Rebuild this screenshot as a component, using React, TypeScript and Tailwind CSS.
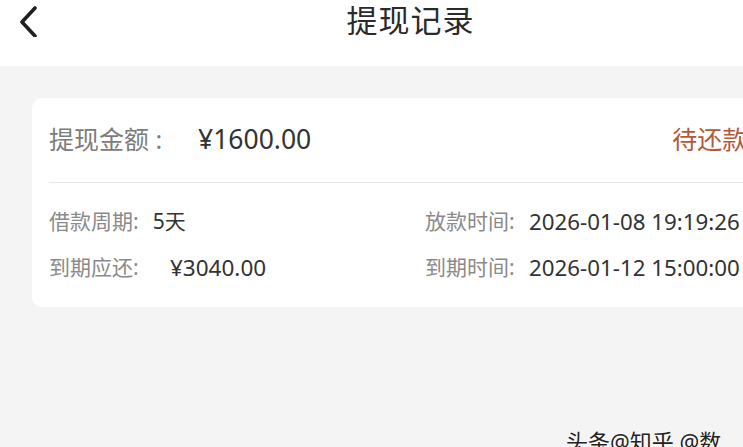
import React from "react";

const font = { fontFamily: '"Noto Sans", "Noto Sans CJK SC", sans-serif' };

export default function App() {
  return (
    <div
      className="relative w-[743px] h-[447px] overflow-hidden bg-[#f4f4f4]"
      style={font}
    >
      {/* Header */}
      <div className="relative flex h-[66px] items-start justify-center bg-white">
        <svg
          className="absolute left-[16px] top-[5px]"
          width="24"
          height="32"
          viewBox="0 0 24 32"
          fill="none"
        >
          <path
            d="M19 3 L6 17 L19 31"
            stroke="#1f1f1f"
            strokeWidth="3.6"
            strokeLinecap="round"
            strokeLinejoin="round"
          />
        </svg>
        <div className="ml-[78px] text-[31px] leading-[40px] tracking-[1px] text-[#2a2a2a]">
          提现记录
        </div>
      </div>

      {/* Card */}
      <div className="ml-[32px] mt-[32px] w-[780px] rounded-[10px] bg-white pl-[17px]">
        <div className="flex h-[84px] items-center">
          <span className="w-[149px] text-[25px] text-[#7c7c7c]">提现金额 :</span>
          <span className="text-[26.5px] text-[#333333]">¥1600.00</span>
          <span className="ml-[361px] text-[25px] whitespace-nowrap text-[#b4583a]">待还款</span>
        </div>
        <div className="h-px bg-[#e8e8e8]" />
        <div className="flex pt-[27px] pb-[27px]">
          <div className="flex w-[376px] flex-col gap-[22px]">
            <div className="flex h-[24px] items-center text-[21px]">
              <span className="text-[#8a8a8a]">借款周期:</span>
              <span className="ml-[14px] text-[#333333]">5天</span>
            </div>
            <div className="flex h-[24px] items-center text-[21px]">
              <span className="w-[121px] text-[#8a8a8a]">到期应还:</span>
              <span className="text-[22.5px] text-[#333333]">¥3040.00</span>
            </div>
          </div>
          <div className="flex flex-col gap-[22px]">
            <div className="flex h-[24px] items-center text-[21px] whitespace-nowrap">
              <span className="w-[104px] text-[#8a8a8a]">放款时间:</span>
              <span className="text-[22.3px] text-[#333333]">2026-01-08 19:19:26</span>
            </div>
            <div className="flex h-[24px] items-center text-[21px] whitespace-nowrap">
              <span className="w-[104px] text-[#8a8a8a]">到期时间:</span>
              <span className="text-[22.3px] text-[#333333]">2026-01-12 15:00:00</span>
            </div>
          </div>
        </div>
      </div>

      {/* Watermark */}
      <div
        className="absolute left-[566px] top-[426px] whitespace-nowrap text-[22px] leading-[30px] text-[#222]"
        style={{ textShadow: "0 0 2px #fff, 0 0 2px #fff" }}
      >
        头条@知乎 @数
      </div>
    </div>
  );
}
